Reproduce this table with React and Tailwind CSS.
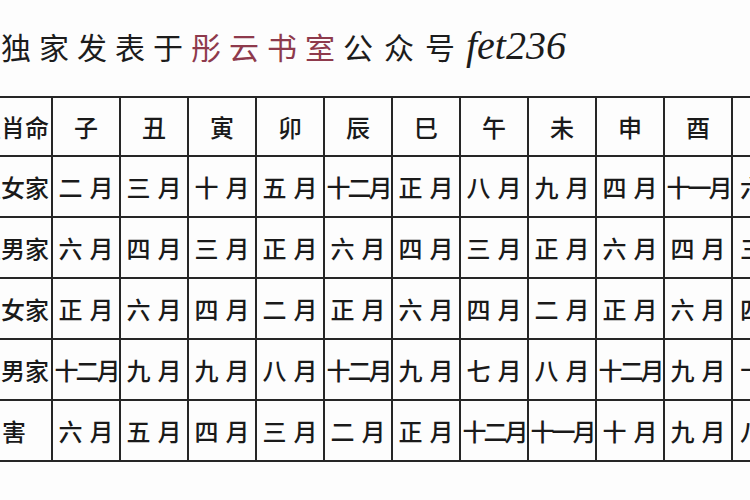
import React from "react";

const header = ["子", "丑", "寅", "卯", "辰", "巳", "午", "未", "申", "酉", ""];
const rows = [
  ["生女家", ["二月", "三月", "十月", "五月", "十二月", "正月", "八月", "九月", "四月", "十一月", "六月"]],
  ["生男家", ["六月", "四月", "三月", "正月", "六月", "四月", "三月", "正月", "六月", "四月", "三月"]],
  ["忌女家", ["正月", "六月", "四月", "二月", "正月", "六月", "四月", "二月", "正月", "六月", "四月"]],
  ["忌男家", ["十二月", "九月", "九月", "八月", "十二月", "九月", "七月", "八月", "十二月", "九月", "十月"]],
  ["害", ["六月", "五月", "四月", "三月", "二月", "正月", "十二月", "十一月", "十月", "九月", "八月"]],
];

const font = { fontFamily: '"Noto Sans CJK SC", "Noto Sans", sans-serif' };

function Cell({ text, last }) {
  const three = text.length >= 3;
  return (
    <div
      className={`flex items-center overflow-hidden whitespace-nowrap border-r-2 border-b-2 border-[#262626] text-[#1a1a1a] ${
        last ? "justify-start" : "justify-center"
      } ${three ? "text-[24px] tracking-[-3px]" : "text-[24px] tracking-[7px] pl-[7px]"}`}
    >
      {text}
    </div>
  );
}

export default function App() {
  return (
    <div className="w-[750px] h-[500px] overflow-hidden bg-[#fdfdfd]" style={font}>
      <div className="h-[96px] pt-[28px] pl-[1px] flex items-baseline whitespace-nowrap text-[30px] leading-[36px] tracking-[8px] text-[#1c1c1c]">
        <span>独家发表于</span>
        <span className="text-[#8e3a4c]">彤云书室</span>
        <span className="tracking-[11px]">公众号</span>
        <span
          className="italic tracking-[0px] text-[40px] leading-[36px]"
          style={{ fontFamily: '"Liberation Serif", serif' }}
        >
          fet236
        </span>
      </div>
      <div className="grid grid-cols-[53px_repeat(11,68px)] grid-rows-[59px_61px_61px_61px_61px_61px] border-t-2 border-[#262626] w-[801px] font-medium">
        <div className="flex items-center justify-end overflow-hidden whitespace-nowrap border-r-2 border-b-2 border-[#262626] text-[24px] text-[#1a1a1a] pr-[2px]">
          生肖命
        </div>
        {header.map((h, i) => (
          <div
            key={i}
            className="flex items-center justify-center border-r-2 border-b-2 border-[#262626] text-[24px] text-[#1a1a1a]"
          >
            {h}
          </div>
        ))}
        {rows.map(([label, cells], r) => (
          <React.Fragment key={r}>
            <div
              className={`flex items-center overflow-hidden whitespace-nowrap border-r-2 border-b-2 border-[#262626] text-[24px] text-[#1a1a1a] ${
                label.length === 1 ? "justify-start pl-[2px]" : "justify-end pr-[2px]"
              }`}
            >
              {label}
            </div>
            {cells.map((c, i) => (
              <Cell key={i} text={c} last={i === cells.length - 1} />
            ))}
          </React.Fragment>
        ))}
      </div>
    </div>
  );
}
